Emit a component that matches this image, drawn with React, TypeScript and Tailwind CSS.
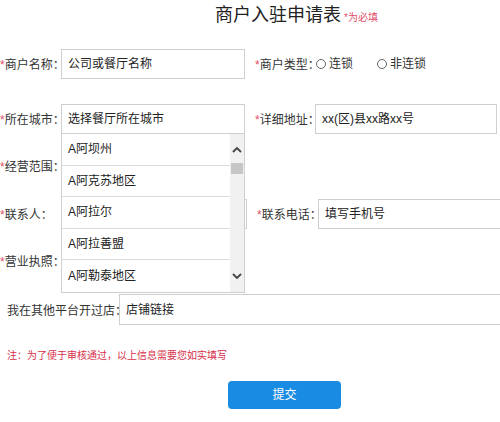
import React from "react";

const cities = ["A阿坝州", "A阿克苏地区", "A阿拉尔", "A阿拉善盟", "A阿勒泰地区"];

const Label = ({ text, required = true }: { text: string; required?: boolean }) => (
  <span className="whitespace-nowrap text-[12px] text-[#333]">
    {required && <span className="text-[#e0506a]">*</span>}
    {text}
  </span>
);

const Field = ({ value, className }: { value: string; className: string }) => (
  <div
    className={`shrink-0 h-[30px] border border-[#cfcfcf] bg-white pl-[6px] flex items-center text-[12px] text-[#222] whitespace-nowrap ${className}`}
  >
    {value}
  </div>
);

const Radio = ({ text }: { text: string }) => (
  <span className="flex items-center gap-[3px] text-[12px] text-[#333]">
    <span className="w-[10px] h-[10px] rounded-full border border-[#666] bg-white" />
    {text}
  </span>
);

export default function App() {
  return (
    <div
      className="w-[500px] h-[422px] overflow-hidden bg-white relative"
      style={{ fontFamily: '"Liberation Sans", "Noto Sans CJK SC", sans-serif' }}
    >
      {/* Title */}
      <div className="flex items-baseline pl-[215px] pt-[2px] h-[28px]">
        <h1 className="text-[18px] leading-[26px] text-[#222]">商户入驻申请表</h1>
        <span className="ml-[3px] text-[10px] text-[#e0506a]">*为必填</span>
      </div>

      {/* 商户名称 / 商户类型 */}
      <div className="flex items-center h-[30px] mt-[21px]">
        <div className="w-[61px] shrink-0"><Label text="商户名称：" /></div>
        <Field value="公司或餐厅名称" className="w-[184px]" />
        <div className="ml-[10px] flex items-center shrink-0">
          <div className="w-[61px] shrink-0"><Label text="商户类型：" /></div>
          <div className="flex items-center gap-[24px]">
            <Radio text="连锁" />
            <Radio text="非连锁" />
          </div>
        </div>
      </div>

      {/* 所在城市 / 详细地址 */}
      <div className="flex items-center h-[30px] mt-[25px] relative z-10">
        <div className="w-[61px] shrink-0"><Label text="所在城市：" /></div>
        <div className="relative shrink-0">
          <Field value="选择餐厅所在城市" className="w-[184px]" />
          {/* city dropdown */}
          <div className="absolute left-0 top-[30px] w-[184px] h-[159px] bg-white border border-t-0 border-[#cfcfcf] flex">
            <div className="flex-1 flex flex-col">
              {cities.map((c, i) => (
                <div
                  key={c}
                  className={`h-[31.8px] flex items-center pl-[6px] text-[12px] text-[#222] ${
                    i < cities.length - 1 ? "border-b border-[#dcdcdc]" : ""
                  }`}
                >
                  {c}
                </div>
              ))}
            </div>
            <div className="w-[14px] bg-[#f1f1f1] flex flex-col items-center justify-between py-[12px] relative">
              <svg width="10" height="7" viewBox="0 0 10 7">
                <path d="M1 6 L5 2 L9 6" fill="none" stroke="#444" strokeWidth="1.8" />
              </svg>
              <div className="absolute top-[29px] left-[1px] w-[12px] h-[11px] bg-[#c6c6c6]" />
              <svg width="10" height="7" viewBox="0 0 10 7">
                <path d="M1 1 L5 5 L9 1" fill="none" stroke="#444" strokeWidth="1.8" />
              </svg>
            </div>
          </div>
        </div>
        <div className="ml-[10px] flex items-center shrink-0">
          <div className="w-[60px] shrink-0"><Label text="详细地址：" /></div>
          <Field value="xx(区)县xx路xx号" className="w-[182px]" />
        </div>
      </div>

      {/* 经营范围 */}
      <div className="flex items-center h-[30px] mt-[18px]">
        <Label text="经营范围：" />
      </div>

      {/* 联系人 / 联系电话 */}
      <div className="flex items-center h-[30px] mt-[17px]">
        <div className="w-[61px] shrink-0"><Label text="联系人：" /></div>
        <Field value="" className="w-[186px]" />
        <div className="ml-[10px] flex items-center shrink-0">
          <div className="w-[61px] shrink-0"><Label text="联系电话：" /></div>
          <Field value="填写手机号" className="w-[190px]" />
        </div>
      </div>

      {/* 营业执照 */}
      <div className="flex items-center h-[30px] mt-[18px]">
        <Label text="营业执照：" />
      </div>

      {/* 其他平台 */}
      <div className="flex items-center h-[31px] mt-[17px] pl-[7px]">
        <div className="w-[112px] shrink-0"><Label text="我在其他平台开过店：" required={false} /></div>
        <Field value="店铺链接" className="w-[390px] h-[31px]" />
      </div>

      {/* Note */}
      <p className="mt-[24px] pl-[7px] text-[10px] leading-[14px] text-[#d8304a]">
        注：为了便于审核通过，以上信息需要您如实填写
      </p>

      {/* Submit */}
      <div className="mt-[18px] pl-[228px]">
        <button className="w-[113px] h-[28px] rounded-[4px] bg-[#1a8be3] text-white text-[12px]">
          提交
        </button>
      </div>
    </div>
  );
}
